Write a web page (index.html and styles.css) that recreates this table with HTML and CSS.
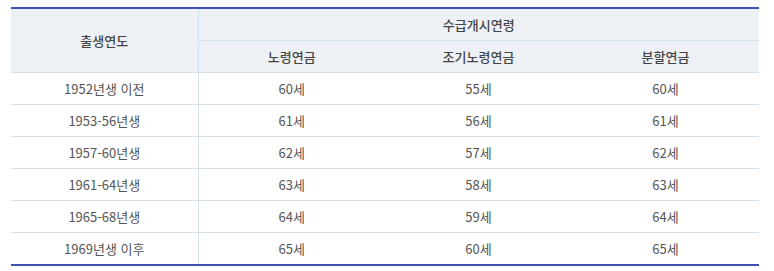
FILE: index.html
```html
<!DOCTYPE html>
<html lang="ko">
<head>
<meta charset="utf-8">
<link rel="stylesheet" href="styles.css">
</head>
<body>
<table class="age-table">
  <thead>
    <tr>
      <th rowspan="2" class="first">출생연도</th>
      <th colspan="3" class="group">수급개시연령</th>
    </tr>
    <tr>
      <th>노령연금</th>
      <th>조기노령연금</th>
      <th>분할연금</th>
    </tr>
  </thead>
  <tbody>
    <tr><td class="first">1952년생 이전</td><td>60세</td><td>55세</td><td>60세</td></tr>
    <tr><td class="first">1953-56년생</td><td>61세</td><td>56세</td><td>61세</td></tr>
    <tr><td class="first">1957-60년생</td><td>62세</td><td>57세</td><td>62세</td></tr>
    <tr><td class="first">1961-64년생</td><td>63세</td><td>58세</td><td>63세</td></tr>
    <tr><td class="first">1965-68년생</td><td>64세</td><td>59세</td><td>64세</td></tr>
    <tr><td class="first">1969년생 이후</td><td>65세</td><td>60세</td><td>65세</td></tr>
  </tbody>
</table>
</body>
</html>
```
FILE: styles.css
```css
html, body {
  margin: 0;
  padding: 0;
  background: #ffffff;
}
body {
  padding: 7px 15px 0 11px;
  font-family: "Noto Sans CJK KR", "Noto Sans", sans-serif;
}
.age-table {
  width: 748px;
  border-collapse: collapse;
  table-layout: fixed;
  border-top: 2px solid #3f51b5;
  border-bottom: 2px solid #3f51b5;
  color: #555555;
  font-size: 13px;
}
.age-table th,
.age-table td {
  text-align: center;
  padding: 0;
  border-bottom: 1px solid #d2e2ec;
}
.age-table th {
  background: #edf1f5;
  font-weight: 500;
  color: #444444;
  height: 31px;
}
.age-table td {
  height: 31px;
}
.age-table .first {
  border-right: 1px solid #d2e2ec;
}
.age-table tbody tr:last-child td {
  border-bottom: none;
}
```
